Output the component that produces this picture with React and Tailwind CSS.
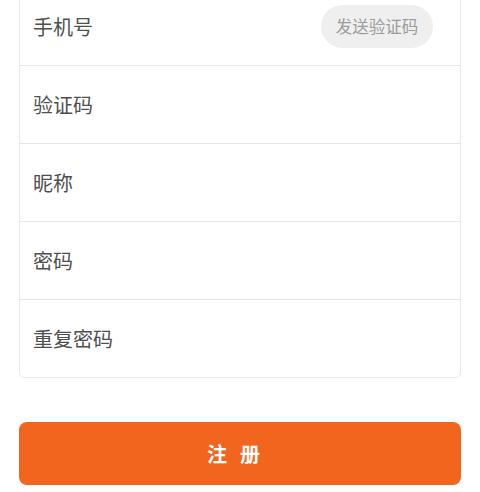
const FIELDS = ["手机号", "验证码", "昵称", "密码", "重复密码"];

export default function App() {
  return (
    <div
      className="min-h-[492px] bg-white overflow-hidden"
      style={{ fontFamily: '"Noto Sans CJK SC", "Noto Sans", sans-serif' }}
    >
      <div className="-mt-[13px] mx-[19px] border border-[#e6e6e6] rounded-[5px] bg-white">
        {FIELDS.map((label, i) => (
          <div
            key={label}
            className={
              "flex items-center justify-between pl-[13px] pr-[27px] " +
              (i < FIELDS.length - 1 ? "h-[78px] border-b border-[#e6e6e6]" : "h-[77px]")
            }
          >
            <span className="text-[20px] text-[#4f4f4f]">{label}</span>
            {i === 0 && (
              <button className="w-[112px] h-[43px] rounded-full bg-[#efefef] text-[16.5px] text-[#9c9c9c] flex items-center justify-center">
                发送验证码
              </button>
            )}
          </div>
        ))}
      </div>

      <div className="mx-[19px] mt-[44px]">
        <button className="w-full h-[63px] rounded-[8px] bg-[#f2651f] text-white text-[20px] font-bold tracking-[13px]">
          注册
        </button>
      </div>
    </div>
  );
}
